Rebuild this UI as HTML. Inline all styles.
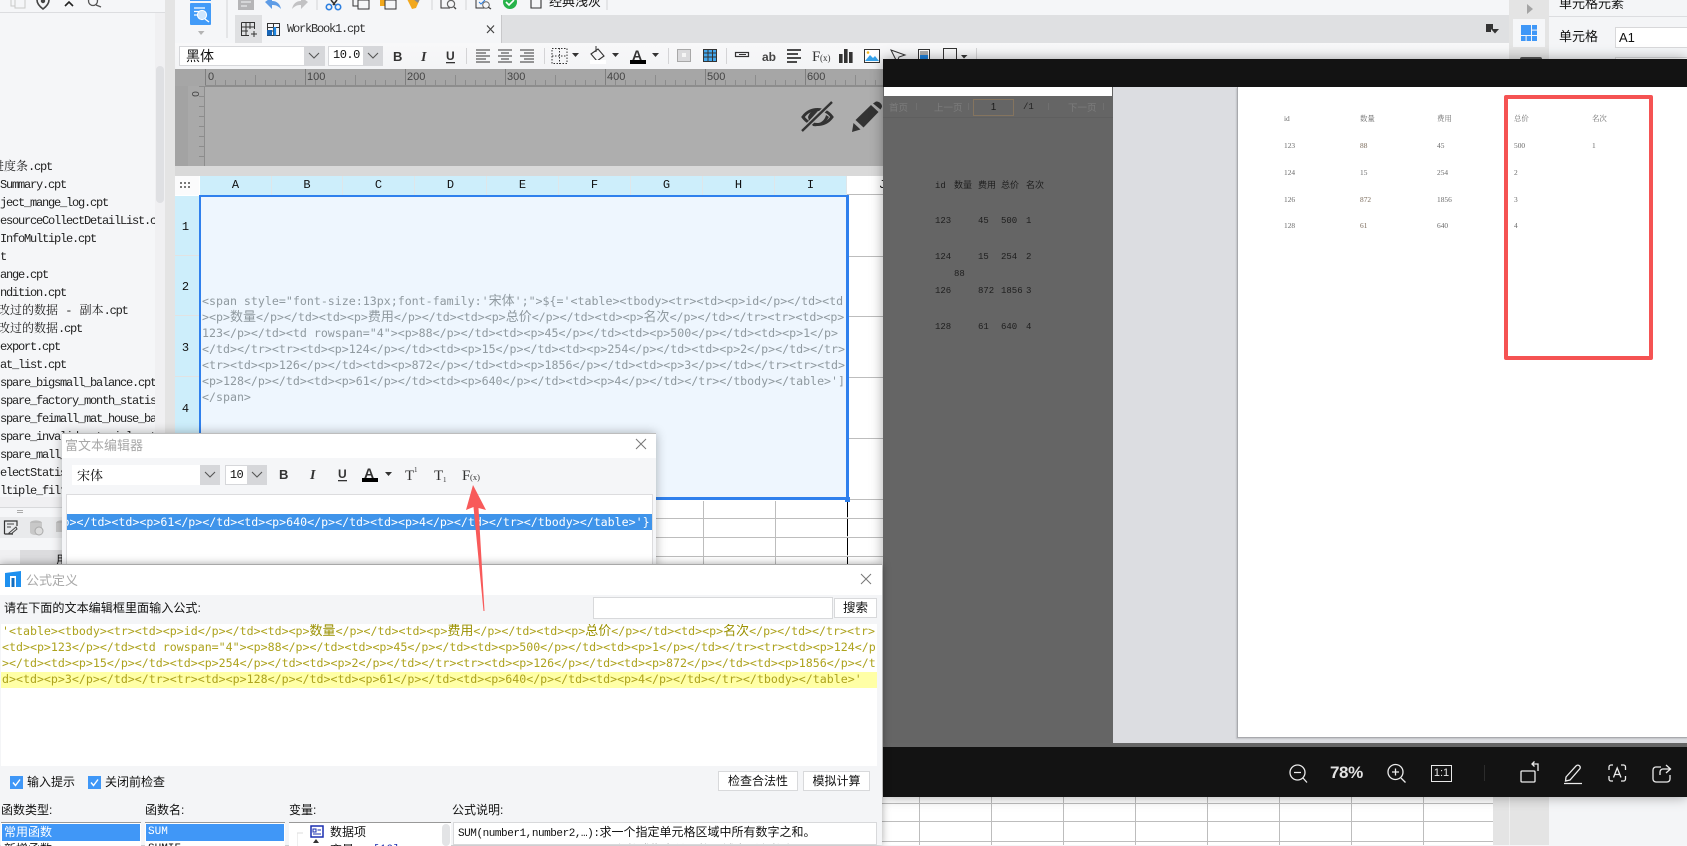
<!DOCTYPE html>
<html lang="zh">
<head>
<meta charset="utf-8">
<title>FineReport</title>
<style>
html,body{margin:0;padding:0}
body{width:1687px;height:845px;overflow:hidden;position:relative;background:#f5f6f8;font-family:"Liberation Sans","Noto Sans CJK SC",sans-serif;color:#111}
.a,.l,.c,.e,.t,.v,svg.a{position:absolute}
.l{left:0;font:12px/18px "Liberation Mono","Noto Serif CJK SC",monospace;letter-spacing:-1.2px;white-space:pre;color:#222}
.l b,.c b,.e b,.m b{font-weight:400;letter-spacing:0}
.c{left:202px;font:11.62px/16px "DejaVu Sans Mono","Noto Sans CJK SC",monospace;white-space:pre;color:#8f999f}
.c b{font-size:13px;line-height:16px}
.e{left:2px;font:11.62px/16px "DejaVu Sans Mono","Noto Sans CJK SC",monospace;white-space:pre;color:#ada21c}
.e b{font-size:13px;line-height:16px;color:#9a9000}
.t{font:7.4px/10px "Liberation Serif","Noto Serif CJK SC",serif;color:#6a6a6a;white-space:pre}
.v{font:9px/12px "Liberation Mono","Noto Sans CJK SC",monospace;color:#1e1e1e;white-space:pre}
.g{font:12px/14px "Noto Sans CJK SC",sans-serif;color:#7c7c7c;white-space:pre}
.h{font:12px/19px "Liberation Mono",monospace;text-align:center;color:#111;top:176px;height:19px;background:#cdeefb;border-right:1px solid #dfe6e9;box-sizing:border-box}
.r{left:175px;width:24px;background:#cdeefb;border-bottom:1px solid #e2e2e2;box-sizing:border-box;font:12px/14px "Liberation Mono",monospace;text-align:center;padding-right:3px;overflow:hidden}
.sep{position:absolute;width:1px;background:#d0d0d3}
.lbl{position:absolute;font-size:14px;line-height:18px;white-space:pre;color:#111}
.hl{position:absolute;height:1px;background:#bdbdbd}
.vl{position:absolute;width:1px;background:#bdbdbd}
</style>
</head>
<body>

<!-- left panel -->
<div class="a" style="left:0;top:0;width:155px;height:845px;background:#f5f6f8;overflow:hidden">
  <div class="l" style="top:158px;left:-8px"><b>进度条</b>.cpt</div>
  <div class="l" style="top:176px">Summary.cpt</div>
  <div class="l" style="top:194px">ject_mange_log.cpt</div>
  <div class="l" style="top:212px">esourceCollectDetailList.c</div>
  <div class="l" style="top:230px">InfoMultiple.cpt</div>
  <div class="l" style="top:248px">t</div>
  <div class="l" style="top:266px">ange.cpt</div>
  <div class="l" style="top:284px">ndition.cpt</div>
  <div class="l" style="top:302px;left:-2px"><b>改过的数据 - 副本</b>.cpt</div>
  <div class="l" style="top:320px;left:-2px"><b>改过的数据</b>.cpt</div>
  <div class="l" style="top:338px">export.cpt</div>
  <div class="l" style="top:356px">at_list.cpt</div>
  <div class="l" style="top:374px">spare_bigsmall_balance.cpt</div>
  <div class="l" style="top:392px">spare_factory_month_statis</div>
  <div class="l" style="top:410px">spare_feimall_mat_house_ba</div>
  <div class="l" style="top:428px">spare_invalid_material.cpt</div>
  <div class="l" style="top:446px">spare_mall_report.cpt</div>
  <div class="l" style="top:464px">electStatistics.cpt</div>
  <div class="l" style="top:482px">ltiple_filter.cpt</div>
</div>
<div class="a" style="left:0;top:12px;width:165px;height:1px;background:#dcdde0"></div>
<svg class="a" style="left:0;top:0" width="176" height="14" viewBox="0 0 176 14">
  <rect x="11" y="-3" width="10" height="9" fill="none" stroke="#c9c9c9"/><rect x="15" y="-1" width="10" height="9" fill="#f5f6f8" stroke="#c9c9c9"/>
  <path d="M37 0 C37 3 39 6 43 9 C47 6 49 3 49 0" fill="none" stroke="#444" stroke-width="1.6"/><circle cx="43" cy="1" r="2.2" fill="#444"/>
  <path d="M65 6 L69 2 L73 6" fill="none" stroke="#222" stroke-width="1.6"/>
  <circle cx="93" cy="1" r="4.5" fill="none" stroke="#555" stroke-width="1.3"/><path d="M96 5 L101 7" stroke="#555" stroke-width="1.4"/>
  <path d="M174 3 L169 8 L174 13Z" fill="#9c9c9c"/>
</svg>
<div class="a" style="left:155px;top:13px;width:10px;height:460px;background:#f0f0f2"></div>
<div class="a" style="left:156px;top:66px;width:8px;height:137px;background:#dfe0e3;border-radius:4px"></div>
<div class="a" style="left:165px;top:0;width:10px;height:845px;background:#e4e4e4"></div>
<div class="a" style="left:0;top:507px;width:175px;height:1px;background:#d8d9db"></div>
<div class="a" style="left:0;top:497px;width:175px;height:10px;background:#f0f0f2"></div>
<div class="a" style="left:17px;top:510px;width:6px;height:1px;background:#aaa"></div>
<div class="a" style="left:17px;top:512px;width:6px;height:1px;background:#aaa"></div>
<div class="a" style="left:0;top:517px;width:165px;height:21px;background:#e9eaec"></div>
<div class="a" style="left:0;top:550px;width:62px;height:14px;background:#f0f0f2"></div>
<div class="a" style="left:20px;top:550px;width:42px;height:14px;background:#dcdcde"></div>
<svg class="a" style="left:0;top:516px" width="62" height="22" viewBox="0 0 62 22">
  <path d="M4.5 18 V5 H17 V10 M4.5 18 H13" fill="none" stroke="#333" stroke-width="1.2"/><path d="M7 8 H14 M7 11 H11 M9 17 L16 11 L17 13 L11 18Z" fill="none" stroke="#444"/>
  <ellipse cx="36" cy="7" rx="6" ry="2.6" fill="#bcbcbc"/><path d="M30 7 V16 C30 20 42 20 42 16 V7" fill="#c8c8c8"/><circle cx="39" cy="15" r="4" fill="#dcdcdc" stroke="#aaa"/>
  <ellipse cx="61" cy="7" rx="5" ry="2.6" fill="#bcbcbc"/><path d="M56 7 V16 H62 V7" fill="#c8c8c8"/>
</svg>
<div class="lbl" style="left:56px;top:551px;font-size:12px">用</div>

<!-- top toolbar -->
<div class="a" style="left:175px;top:0;width:1334px;height:15px;background:#f5f6f8"></div>
<div class="a" style="left:190px;top:0;width:21px;height:1px;background:#3f97f7"></div>
<svg class="a" style="left:175px;top:0" width="440" height="44" viewBox="175 0 440 44">
  <rect x="190" y="3" width="21" height="22" rx="1" fill="#429bf8"/>
  <path d="M194 8 H205 M194 11.5 H200 M194 15 H198" stroke="#fff" stroke-width="1.3"/>
  <circle cx="202" cy="15" r="4.6" fill="#cfe6fd" stroke="#fff"/><path d="M205 19 L209 22" stroke="#fff" stroke-width="1.4"/>
  <path d="M198 31 H204.5 L201 35Z" fill="#b4b4b4"/>
  <rect x="226.5" y="0" width="1" height="38" fill="#d4d4d6"/>
  <rect x="238" y="-3" width="16" height="13" fill="#b5b5b7"/><path d="M241 2 H251 M241 6 H247" stroke="#f5f6f8"/>
  <path d="M265 2 L272 -3 V1 C277 1 280 4 281 9 C277 5 275 5 272 5 V9Z" fill="#5e9ce6"/>
  <path d="M308 2 L301 -3 V1 C296 1 293 4 292 9 C296 5 298 5 301 5 V9Z" fill="#c2c2c4"/>
  <rect x="316.5" y="0" width="1" height="10" fill="#d4d4d6"/>
  <path d="M331 0 L335 5 M337 0 L333 5" stroke="#333" stroke-width="1.6"/>
  <circle cx="329" cy="7" r="2.7" fill="none" stroke="#2d7fe0" stroke-width="1.6"/><circle cx="338" cy="7" r="2.7" fill="none" stroke="#2d7fe0" stroke-width="1.6"/>
  <rect x="353" y="-4" width="10" height="10" fill="none" stroke="#333"/><rect x="358" y="0" width="11" height="9" fill="#f5f6f8" stroke="#333"/>
  <rect x="380" y="-4" width="10" height="10" fill="#f2a81d"/><rect x="385" y="0" width="11" height="9" fill="#f5f6f8" stroke="#333"/>
  <path d="M407 -1 H420 L416 8 L412 9Z" fill="#f2a81d"/><path d="M413 -1 L420 -1 L418 3Z" fill="#888"/>
  <rect x="431.5" y="0" width="1" height="10" fill="#d4d4d6"/>
  <path d="M441 -1 V8 H450" fill="none" stroke="#333"/><circle cx="451" cy="4" r="3.6" fill="none" stroke="#666" stroke-width="1.2"/><path d="M454 7 L456 9" stroke="#444" stroke-width="1.3"/>
  <rect x="465.5" y="0" width="1" height="10" fill="#d4d4d6"/>
  <path d="M476 -1 V8 H485" fill="none" stroke="#333"/><path d="M479 2 L481 4 L485 0" fill="none" stroke="#2d7fe0"/><circle cx="486" cy="5" r="3.3" fill="none" stroke="#666"/><path d="M488 7 L491 9" stroke="#444" stroke-width="1.3"/>
  <circle cx="510" cy="2" r="7" fill="#27b34a"/><path d="M506 2 L509 5 L514 0" fill="none" stroke="#fff" stroke-width="1.6"/>
  <path d="M531 -2 V8 H541 V-2" fill="none" stroke="#333" stroke-width="1.1"/>
  <rect x="606.5" y="0" width="1" height="10" fill="#d4d4d6"/>
</svg>
<div class="lbl" style="left:549px;top:-7px;font-size:13px;line-height:18px">经典浅灰</div>

<!-- tab row -->
<div class="a" style="left:235px;top:15px;width:1274px;height:28px;background:#dfe0e2"></div>
<div class="a" style="left:262px;top:15px;width:239px;height:28px;background:#f5f6f8;border-right:1px solid #c8c8ca;box-sizing:content-box"></div>
<svg class="a" style="left:235px;top:15px" width="270" height="28" viewBox="235 15 270 28">
  <path d="M241.5 22.5 H254.5 V29 M241.5 22.5 V35.5 H249 M241.5 27 H254 M241.5 31 H248 M246 22.5 V35.5 M250 22.5 V29 M251 34 H257 M254 31 V37" fill="none" stroke="#333" stroke-width="1"/>
  <path d="M267.5 23.5 H279.5 V35.5 H267.5Z M267.5 27.5 H279.5 M273.5 23.5 V35.5 M267.5 31 H273" fill="none" stroke="#333" stroke-width="1"/>
  <rect x="267" y="30" width="5" height="5.5" fill="#1565b8"/><rect x="273.5" y="27" width="2.6" height="8.5" fill="#1e88e5"/>
  <path d="M487 25.5 L494 33 M494 25.5 L487 33" stroke="#444" stroke-width="1.2"/>
</svg>
<div class="a" style="left:287px;top:21px;font:12px/16px 'Liberation Mono',monospace;letter-spacing:-1.2px;color:#333;white-space:pre">WorkBook1.cpt</div>
<svg class="a" style="left:1486px;top:24px" width="13" height="10" viewBox="0 0 13 10"><path d="M0 0 H7 V5 H5 V8 H0Z" fill="#333"/><path d="M5 5 H13 L9 9.5Z" fill="#333"/></svg>

<!-- format toolbar -->
<div class="a" style="left:175px;top:43px;width:1334px;height:26px;background:linear-gradient(#f8f8f9,#f3f4f6)"></div>
<div class="a" style="left:179px;top:46px;width:146px;height:20px;background:#d6d7da"></div>
<div class="a" style="left:180px;top:47px;width:124px;height:18px;background:#fff"></div>
<div class="a" style="left:186px;top:46px;font:14px/20px 'Noto Sans CJK SC',sans-serif">黑体</div>
<div class="a" style="left:328px;top:46px;width:55px;height:20px;background:#d6d7da"></div>
<div class="a" style="left:329px;top:47px;width:34px;height:18px;background:#fff"></div>
<div class="a" style="left:333px;top:46px;font:12px/19px 'Liberation Mono',monospace;letter-spacing:-.5px">10.0</div>
<svg class="a" style="left:175px;top:43px" width="810" height="26" viewBox="175 43 810 26">
  <path d="M309 53 L314 58 L319 53 M368 53 L373 58 L378 53" fill="none" stroke="#555" stroke-width="1.1"/>
  <text x="393" y="61" font-family="Liberation Sans" font-weight="700" font-size="13" fill="#333">B</text>
  <text x="421" y="61" font-family="Liberation Serif" font-style="italic" font-weight="700" font-size="14" fill="#333">I</text>
  <text x="446" y="60" font-family="Liberation Sans" font-weight="700" font-size="12" fill="#333">U</text><rect x="446" y="62" width="9" height="1.3" fill="#333"/>
  <rect x="466" y="48" width="1" height="16" fill="#d4d4d6"/>
  <path d="M476 51 H490 M476 54 H486 M476 57 H490 M476 60 H486 M476 63 H490" stroke="#333" transform="translate(0 -1)"/>
  <path d="M498 50 H512 M501 53 H509 M498 56 H512 M501 59 H509 M498 62 H512" stroke="#333"/>
  <path d="M520 50 H534 M524 53 H534 M520 56 H534 M524 59 H534 M520 62 H534" stroke="#333"/>
  <rect x="544" y="48" width="1" height="16" fill="#d4d4d6"/>
  <rect x="552" y="48.5" width="15" height="15" fill="none" stroke="#333" stroke-dasharray="1.5 1.5"/><path d="M559.5 48 V64 M552 56 H567" stroke="#333" stroke-dasharray="1.5 1.5"/>
  <path d="M572 53 H579 L575.5 57Z M612 53 H619 L615.5 57Z M652 53 H659 L655.5 57Z" fill="#333"/>
  <path d="M591 54 L598 49 L604 56 L597 61Z" fill="none" stroke="#333" stroke-width="1.1"/><path d="M596 46 V52" stroke="#333"/><rect x="590" y="60" width="16" height="4" fill="#fff"/>
  <text x="632" y="60" font-family="Liberation Sans" font-weight="700" font-size="14" fill="#333">A</text><rect x="630" y="60" width="16" height="4" fill="#000"/>
  <rect x="668" y="48" width="1" height="16" fill="#d4d4d6"/>
  <rect x="677.5" y="49.5" width="13" height="12" fill="#dadadc" stroke="#a8a8a8"/><rect x="682" y="53" width="4" height="4" fill="#f5f5f5"/>
  <rect x="703.5" y="49.5" width="13" height="12" fill="#41a7ee" stroke="#333"/><path d="M703 53 H717 M703 57 H717 M708 50 V61 M712.5 50 V61" stroke="#333"/>
  <rect x="726" y="48" width="1" height="16" fill="#d4d4d6"/>
  <rect x="735.5" y="52.5" width="13" height="4" fill="none" stroke="#333" stroke-width="1.2"/><path d="M739 54.5 H746" stroke="#333"/>
  <text x="762" y="61" font-family="Liberation Sans" font-weight="700" font-size="12" fill="#444">ab</text>
  <path d="M787 50 H801 M787 54 H798 M787 58 H801 M787 62 H797" stroke="#333" stroke-width="1.8"/>
  <text x="812" y="61" font-family="Liberation Serif" font-size="15" fill="#333">F</text><text x="820" y="61" font-family="Liberation Serif" font-size="9" fill="#333">(x)</text>
  <rect x="839" y="54" width="3.6" height="9" fill="#333"/><rect x="844" y="49" width="3.6" height="14" fill="#333"/><rect x="849" y="52" width="3.6" height="11" fill="#333"/>
  <rect x="864.5" y="49.5" width="15" height="13" fill="#fff" stroke="#333"/><path d="M865 61 L870 55 L873 58 L875 56 L879 61Z" fill="#36a2ea"/><circle cx="868" cy="52.5" r="1.3" fill="#f5b81c"/>
  <path d="M891 50 L905 55 L899 57 L897 62Z" fill="none" stroke="#333"/>
  <rect x="918.5" y="49.5" width="11" height="13" fill="#fff" stroke="#333"/><path d="M920 52 H928 M920 54 H928" stroke="#555"/><rect x="920" y="55" width="8" height="5" fill="#1e7fd8"/>
  <rect x="943.5" y="48.5" width="13" height="14" fill="none" stroke="#333"/>
  <path d="M961 55 H967.5 L964 58.5Z" fill="#333"/>
  <rect x="976" y="48" width="1" height="16" fill="#d4d4d6"/>
</svg>

<!-- ruler & canvas -->
<div class="a" style="left:175px;top:69px;width:708px;height:107px;background:#aeaeae;overflow:hidden">
  <div class="a" style="left:0;top:0;width:708px;height:17px;background:#a6a6a6"></div>
  <div class="a" style="left:30px;top:16px;width:678px;height:2px;background:#8d8d8d"></div>
  <div class="a" style="left:30px;top:11px;width:678px;height:5px;background:repeating-linear-gradient(90deg,#8c8c8c 0 1px,transparent 1px 10px)"></div>
  <div class="a" style="left:30px;top:6px;width:678px;height:10px;background:repeating-linear-gradient(90deg,#8c8c8c 0 1px,transparent 1px 50px)"></div>
  <div class="a" style="left:30px;top:0;width:678px;height:16px;background:repeating-linear-gradient(90deg,#7f7f7f 0 1px,transparent 1px 100px)"></div>
  <div class="a" style="left:0;top:17px;width:13px;height:80px;background:#a3a3a3"></div>
  <div class="a" style="left:13px;top:17px;width:17px;height:80px;background:#a9a9a9"></div>
  <div class="a" style="left:29px;top:17px;width:1px;height:80px;background:#8d8d8d"></div>
  <div class="a" style="left:24px;top:17px;width:5px;height:80px;background:repeating-linear-gradient(180deg,#8c8c8c 0 1px,transparent 1px 10px)"></div>
  <div class="a" style="left:33px;top:2px;font:11px/13px 'Liberation Sans',sans-serif;color:#444">0</div>
  <div class="a" style="left:132px;top:2px;font:11px/13px 'Liberation Sans',sans-serif;color:#444">100</div>
  <div class="a" style="left:232px;top:2px;font:11px/13px 'Liberation Sans',sans-serif;color:#444">200</div>
  <div class="a" style="left:332px;top:2px;font:11px/13px 'Liberation Sans',sans-serif;color:#444">300</div>
  <div class="a" style="left:432px;top:2px;font:11px/13px 'Liberation Sans',sans-serif;color:#444">400</div>
  <div class="a" style="left:532px;top:2px;font:11px/13px 'Liberation Sans',sans-serif;color:#444">500</div>
  <div class="a" style="left:632px;top:2px;font:11px/13px 'Liberation Sans',sans-serif;color:#444">600</div>
  <div class="a" style="left:16px;top:20px;font:10px/10px 'Liberation Sans',sans-serif;color:#444;transform:rotate(90deg)">0</div>
</div>
<svg class="a" style="left:801px;top:101px" width="33" height="31" viewBox="0 0 33 31">
  <path d="M2 16 C9 6 24 6 31 16 C24 26 9 26 2 16Z" fill="none" stroke="#333" stroke-width="3"/>
  <path d="M7 16 C9 10 13 9 17 10 L8 20Z" fill="#333"/>
  <path d="M12 23 C20 23 24 19 25 14 L28 16 C24 23 18 26 12 25Z" fill="#333"/>
  <path d="M1 30 L31 1" stroke="#aeaeae" stroke-width="5"/>
  <path d="M1 30 L31 1" stroke="#333" stroke-width="2.4"/>
</svg>
<svg class="a" style="left:852px;top:101px" width="31" height="31" viewBox="0 0 31 31">
  <path d="M0 31 L1.5 22 L8.5 28.5Z" fill="#333"/><path d="M3.5 19 L19 4 L26.5 11 L11.5 26.5Z" fill="#333"/><path d="M21 2.5 L24 0.5 C27 0 30.5 3 30 6 L28.5 8.5Z" fill="#333"/>
</svg>

<!-- grid -->
<div class="a" style="left:175px;top:166px;width:708px;height:10px;background:#d9d9d9"></div>
<div class="a" style="left:175px;top:176px;width:1318px;height:669px;background:#fff"></div>
<div class="a" style="left:175px;top:176px;width:24px;height:19px;background:#fbfbfc"></div>
<svg class="a" style="left:179px;top:181px" width="12" height="10" viewBox="0 0 12 10"><path d="M1 1 h2v2h-2z M5 1 h2v2h-2z M9 1 h2v2h-2z M1 5 h2v2h-2z M5 5 h2v2h-2z M9 5 h2v2h-2z" fill="#777"/></svg>
<div class="a h" style="left:200px;width:72px">A</div>
<div class="a h" style="left:272px;width:71px">B</div>
<div class="a h" style="left:343px;width:72px">C</div>
<div class="a h" style="left:415px;width:72px">D</div>
<div class="a h" style="left:487px;width:72px">E</div>
<div class="a h" style="left:559px;width:72px">F</div>
<div class="a h" style="left:631px;width:72px">G</div>
<div class="a h" style="left:703px;width:72px">H</div>
<div class="a h" style="left:775px;width:72px">I</div>
<div class="a h" style="left:847px;width:72px;background:#fff;border-bottom:1px solid #bbb">J</div>
<div class="a r" style="top:196px;height:60px;line-height:63px">1</div>
<div class="a r" style="top:256px;height:60px;line-height:63px">2</div>
<div class="a r" style="top:316px;height:61px;line-height:64px">3</div>
<div class="a r" style="top:377px;height:61px;line-height:64px">4</div>
<div class="a r" style="top:438px;height:61px;line-height:64px">5</div>
<!-- selected -->
<div class="a" style="left:199px;top:195px;width:645px;height:300px;background:#eef6fe;border:2px solid #2f80ed;border-width:2px 3px 3px 2px"></div>
<div class="hl" style="left:849px;top:256px;width:34px"></div>
<div class="hl" style="left:849px;top:316px;width:34px"></div>
<div class="hl" style="left:849px;top:377px;width:34px"></div>
<div class="hl" style="left:849px;top:438px;width:34px"></div>
<div class="hl" style="left:849px;top:499px;width:34px"></div>
<div class="hl" style="left:650px;top:518px;width:233px"></div>
<div class="hl" style="left:650px;top:537px;width:233px"></div>
<div class="hl" style="left:650px;top:556px;width:233px"></div>
<div class="vl" style="left:703px;top:501px;height:63px"></div>
<div class="vl" style="left:775px;top:501px;height:63px"></div>
<div class="a" style="left:847px;top:500px;width:1px;height:64px;background:repeating-linear-gradient(180deg,#000 0 17px,#bbb 17px 19px)"></div>
<div class="a" style="left:845px;top:497px;width:5px;height:5px;background:#2f80ed"></div>

<div class="c" style="top:293px">&lt;span style="font-size:13px;font-family:'<b>宋体</b>';"&gt;${='&lt;table&gt;&lt;tbody&gt;&lt;tr&gt;&lt;td&gt;&lt;p&gt;id&lt;/p&gt;&lt;/td&gt;&lt;td</div>
<div class="c" style="top:309px">&gt;&lt;p&gt;<b>数量</b>&lt;/p&gt;&lt;/td&gt;&lt;td&gt;&lt;p&gt;<b>费用</b>&lt;/p&gt;&lt;/td&gt;&lt;td&gt;&lt;p&gt;<b>总价</b>&lt;/p&gt;&lt;/td&gt;&lt;td&gt;&lt;p&gt;<b>名次</b>&lt;/p&gt;&lt;/td&gt;&lt;/tr&gt;&lt;tr&gt;&lt;td&gt;&lt;p&gt;</div>
<div class="c" style="top:325px">123&lt;/p&gt;&lt;/td&gt;&lt;td rowspan="4"&gt;&lt;p&gt;88&lt;/p&gt;&lt;/td&gt;&lt;td&gt;&lt;p&gt;45&lt;/p&gt;&lt;/td&gt;&lt;td&gt;&lt;p&gt;500&lt;/p&gt;&lt;/td&gt;&lt;td&gt;&lt;p&gt;1&lt;/p&gt;</div>
<div class="c" style="top:341px">&lt;/td&gt;&lt;/tr&gt;&lt;tr&gt;&lt;td&gt;&lt;p&gt;124&lt;/p&gt;&lt;/td&gt;&lt;td&gt;&lt;p&gt;15&lt;/p&gt;&lt;/td&gt;&lt;td&gt;&lt;p&gt;254&lt;/p&gt;&lt;/td&gt;&lt;td&gt;&lt;p&gt;2&lt;/p&gt;&lt;/td&gt;&lt;/tr&gt;</div>
<div class="c" style="top:357px">&lt;tr&gt;&lt;td&gt;&lt;p&gt;126&lt;/p&gt;&lt;/td&gt;&lt;td&gt;&lt;p&gt;872&lt;/p&gt;&lt;/td&gt;&lt;td&gt;&lt;p&gt;1856&lt;/p&gt;&lt;/td&gt;&lt;td&gt;&lt;p&gt;3&lt;/p&gt;&lt;/td&gt;&lt;/tr&gt;&lt;tr&gt;&lt;td&gt;</div>
<div class="c" style="top:373px">&lt;p&gt;128&lt;/p&gt;&lt;/td&gt;&lt;td&gt;&lt;p&gt;61&lt;/p&gt;&lt;/td&gt;&lt;td&gt;&lt;p&gt;640&lt;/p&gt;&lt;/td&gt;&lt;td&gt;&lt;p&gt;4&lt;/p&gt;&lt;/td&gt;&lt;/tr&gt;&lt;/tbody&gt;&lt;/table&gt;']</div>
<div class="c" style="top:389px">&lt;/span&gt;</div>

<!-- bottom grid -->
<div class="hl" style="left:882px;top:803px;width:611px"></div>
<div class="hl" style="left:882px;top:821px;width:611px"></div>
<div class="hl" style="left:882px;top:841px;width:611px"></div>
<div class="vl" style="left:919px;top:797px;height:48px"></div>
<div class="vl" style="left:991px;top:797px;height:48px"></div>
<div class="vl" style="left:1063px;top:797px;height:48px"></div>
<div class="vl" style="left:1135px;top:797px;height:48px"></div>
<div class="vl" style="left:1207px;top:797px;height:48px"></div>
<div class="vl" style="left:1279px;top:797px;height:48px"></div>
<div class="vl" style="left:1351px;top:797px;height:48px"></div>
<div class="vl" style="left:1423px;top:797px;height:48px"></div>

<!-- right panel -->
<div class="a" style="left:1493px;top:59px;width:16px;height:786px;background:#e4e4e4"></div>
<div class="a" style="left:1509px;top:0;width:40px;height:845px;background:#e4e4e4"></div>
<div class="a" style="left:1509px;top:797px;width:1px;height:48px;background:#f0f0f0"></div>
<svg class="a" style="left:1526px;top:3px" width="8" height="12" viewBox="0 0 8 12"><path d="M1 1 L7 6 L1 11Z" fill="#a4a4a4"/></svg>
<div class="a" style="left:1513px;top:19px;width:32px;height:28px;background:#f5f6f8"></div>
<svg class="a" style="left:1521px;top:25px" width="16" height="16" viewBox="0 0 16 16"><rect width="10" height="10" fill="#3f97f7"/><rect x="11" width="5" height="4.6" fill="#3f97f7"/><rect x="11" y="5.6" width="5" height="4.4" fill="#3f97f7"/><rect y="11" width="4.6" height="5" fill="#3f97f7"/><rect x="5.6" y="11" width="4.4" height="5" fill="#3f97f7"/><rect x="11" y="11" width="5" height="5" fill="#3f97f7"/></svg>
<div class="a" style="left:1520px;top:57px;width:22px;height:4px;background:#555;border-radius:2px"></div>
<div class="a" style="left:1549px;top:0;width:138px;height:845px;background:#f4f5f7"></div>
<div class="a" style="left:1549px;top:16px;width:138px;height:1px;background:#dcdde0"></div>
<div class="lbl" style="left:1559px;top:-5px;font-size:13px">单元格元素</div>
<div class="lbl" style="left:1559px;top:28px;font-size:13px">单元格</div>
<div class="a" style="left:1615px;top:27px;width:72px;height:19px;background:#fff;border:1px solid #d8d8da;border-right:0;font:13px/19px 'Liberation Sans',sans-serif;padding-left:3px;box-sizing:content-box">A1</div>
<div class="a" style="left:1615px;top:57px;width:72px;height:10px;background:#fff;border:1px solid #d8d8da"></div>

<!-- preview overlay -->
<div class="a" style="left:883px;top:59px;width:804px;height:738px;background:#dcdde1;box-shadow:0 0 12px rgba(0,0,0,.35)"></div>
<div class="a" style="left:883px;top:87px;width:804px;height:660px;background:#dcdde1;overflow:hidden">
  <div class="a" style="left:0;top:0;width:230px;height:660px;background:#656565"></div>
  <div class="a" style="left:1px;top:0;width:228px;height:9px;background:#fff"></div>
  <div class="a" style="left:0;top:30px;width:230px;height:1px;background:#5f5f5f"></div>
  <div class="a" style="left:0;top:656px;width:804px;height:4px;background:#666"></div>
  <div class="a" style="left:354px;top:0;width:450px;height:650px;background:#fff;border-left:1px solid #a8a9ad;border-bottom:1px solid #a8a9ad;box-shadow:-1px 1px 1px #c2c3c7"></div>
</div>
<div class="a" style="left:883px;top:59px;width:804px;height:28px;background:#131313"></div>
<div class="a" style="left:883px;top:747px;width:804px;height:50px;background:#131313"></div>

<!-- preview left content -->
<div class="a g" style="left:889px;top:100px;font-size:9.5px">首页</div>
<div class="a g" style="left:934px;top:100px;font-size:9.5px">上一页</div>
<div class="a g" style="left:1068px;top:100px;font-size:9.5px">下一页</div>
<div class="a" style="left:973px;top:99px;width:39px;height:15px;border:1px solid #84745f;text-align:center;font:10px/15px 'Liberation Sans',sans-serif;color:#1a1a1a">1</div>
<div class="a" style="left:1023px;top:100px;font:9px/14px 'Liberation Mono',monospace;color:#222">/1</div>
<div class="a" style="left:916px;top:103px;width:1px;height:7px;background:#707070"></div>
<div class="a" style="left:968px;top:103px;width:1px;height:7px;background:#707070"></div>
<div class="a" style="left:1048px;top:103px;width:1px;height:7px;background:#707070"></div>
<div class="a" style="left:1103px;top:103px;width:1px;height:7px;background:#707070"></div>

<div class="v" style="left:935px;top:180px">id</div><div class="v" style="left:954px;top:180px">数量</div><div class="v" style="left:978px;top:180px">费用</div><div class="v" style="left:1001px;top:180px">总价</div><div class="v" style="left:1026px;top:180px">名次</div>
<div class="v" style="left:935px;top:215px">123</div><div class="v" style="left:978px;top:215px">45</div><div class="v" style="left:1001px;top:215px">500</div><div class="v" style="left:1026px;top:215px">1</div>
<div class="v" style="left:935px;top:251px">124</div><div class="v" style="left:978px;top:251px">15</div><div class="v" style="left:1001px;top:251px">254</div><div class="v" style="left:1026px;top:251px">2</div>
<div class="v" style="left:954px;top:268px">88</div>
<div class="v" style="left:935px;top:285px">126</div><div class="v" style="left:978px;top:285px">872</div><div class="v" style="left:1001px;top:285px">1856</div><div class="v" style="left:1026px;top:285px">3</div>
<div class="v" style="left:935px;top:321px">128</div><div class="v" style="left:978px;top:321px">61</div><div class="v" style="left:1001px;top:321px">640</div><div class="v" style="left:1026px;top:321px">4</div>

<!-- preview page table -->
<div class="t" style="left:1284px;top:114px">id</div><div class="t" style="left:1360px;top:114px">数量</div><div class="t" style="left:1437px;top:114px">费用</div><div class="t" style="left:1514px;top:114px">总价</div><div class="t" style="left:1592px;top:114px">名次</div>
<div class="t" style="left:1284px;top:141px">123</div><div class="t" style="left:1360px;top:141px;color:#7a6a5a">88</div><div class="t" style="left:1437px;top:141px">45</div><div class="t" style="left:1514px;top:141px">500</div><div class="t" style="left:1592px;top:141px">1</div>
<div class="t" style="left:1284px;top:168px">124</div><div class="t" style="left:1360px;top:168px">15</div><div class="t" style="left:1437px;top:168px">254</div><div class="t" style="left:1514px;top:168px">2</div>
<div class="t" style="left:1284px;top:195px">126</div><div class="t" style="left:1360px;top:195px;color:#7a6a5a">872</div><div class="t" style="left:1437px;top:195px">1856</div><div class="t" style="left:1514px;top:195px">3</div>
<div class="t" style="left:1284px;top:221px">128</div><div class="t" style="left:1360px;top:221px;color:#7a6a5a">61</div><div class="t" style="left:1437px;top:221px">640</div><div class="t" style="left:1514px;top:221px">4</div>
<div class="a" style="left:1504px;top:95px;width:141px;height:257px;border:4px solid #f55353;border-radius:2px"></div>

<!-- preview bottom toolbar -->
<div class="a" style="left:1330px;top:762px;font:700 17px/22px 'Liberation Sans',sans-serif;color:#e2e2e2;letter-spacing:-.4px">78%</div>
<div class="a" style="left:1431px;top:765px;width:19px;height:15px;border:1px solid #e8e8e8;text-align:center;font:11px/15px 'Liberation Sans',sans-serif;color:#e8e8e8">1:1</div>
<div class="a" style="left:1484px;top:765px;width:1px;height:16px;background:#2c2c2c"></div>
<svg class="a" style="left:1285px;top:758px" width="400" height="32" viewBox="1285 758 400 32" fill="none" stroke="#ececec" stroke-width="1.3">
  <circle cx="1297.5" cy="772.5" r="7.5"/><path d="M1303 778 L1307 782.5 M1294 772.5 H1301"/>
  <circle cx="1395.5" cy="772" r="7.5"/><path d="M1401 778 L1405.5 782.5 M1392 772 H1399 M1395.5 768.5 V775.5"/>
  <rect x="1521" y="771" width="14" height="11" rx="1"/><path d="M1538 771 V764 H1532 M1534.5 761.5 L1532 764 L1534.5 766.5"/>
  <path d="M1566 777 L1576 766 C1578 764 1581 766 1580 768.5 L1570 780 L1565.5 781Z"/><path d="M1564 783.5 H1582"/>
  <path d="M1609 770 V767 A2 2 0 0 1 1611 765 H1613 M1621 765 H1623.5 A2 2 0 0 1 1625.5 767 V770 M1625.5 776 V779 A2 2 0 0 1 1623.5 781 H1621 M1613 781 H1611 A2 2 0 0 1 1609 779 V776"/>
  <path d="M1613.5 777.5 L1617.2 768 L1621 777.5 M1614.8 774.5 H1619.7"/>
  <path d="M1661 767 H1656 A3 3 0 0 0 1653 770 V779 A3 3 0 0 0 1656 782 H1667 A3 3 0 0 0 1670 779 V775"/>
  <path d="M1660 775 V772 A3 3 0 0 1 1663 769 H1670 M1666 765 L1670.5 769 L1666 773"/>
</svg>

<!-- rich text dialog -->
<div class="a" style="left:62px;top:433px;width:594px;height:140px;background:#f5f6f8;box-shadow:0 0 10px rgba(0,0,0,.3);border-top:1px solid #bdbdbd;box-sizing:border-box"></div>
<div class="a" style="left:62px;top:434px;width:594px;height:24px;background:#fff"></div>
<div class="a" style="left:65px;top:433px;font:13px/24px 'Noto Sans CJK SC',sans-serif;color:#a8a8a8">富文本编辑器</div>
<svg class="a" style="left:635px;top:438px" width="12" height="12" viewBox="0 0 12 12"><path d="M1 1 L11 11 M11 1 L1 11" stroke="#777" stroke-width="1"/></svg>
<div class="a" style="left:72px;top:465px;width:148px;height:20px;background:#d6d7da"></div>
<div class="a" style="left:72px;top:465px;width:128px;height:20px;background:#fff"></div>
<div class="a" style="left:77px;top:464px;font:13px/21px 'Noto Serif CJK SC',serif">宋体</div>
<div class="a" style="left:225px;top:465px;width:42px;height:20px;background:#d6d7da"></div>
<div class="a" style="left:226px;top:466px;width:21px;height:18px;background:#fff;font:12px/18px 'Liberation Mono',monospace;text-align:center;letter-spacing:-.6px">10</div>
<svg class="a" style="left:200px;top:462px" width="300" height="28" viewBox="200 462 300 28">
  <path d="M205 472 L210 477 L215 472 M252 472 L257 477 L262 472" fill="none" stroke="#555" stroke-width="1.1"/>
  <text x="279" y="479" font-family="Liberation Sans" font-weight="700" font-size="13" fill="#333">B</text>
  <text x="310" y="479" font-family="Liberation Serif" font-style="italic" font-weight="700" font-size="14" fill="#333">I</text>
  <text x="338" y="478" font-family="Liberation Sans" font-weight="700" font-size="12" fill="#333">U</text><rect x="338" y="480" width="9" height="1.3" fill="#333"/>
  <text x="364" y="478" font-family="Liberation Sans" font-weight="700" font-size="14" fill="#333">A</text><rect x="362" y="478" width="16" height="4" fill="#000"/>
  <path d="M385 472 H392 L388.5 476Z" fill="#333"/>
  <text x="405" y="480" font-family="Liberation Serif" font-size="15" fill="#333">T</text><text x="414" y="472" font-family="Liberation Serif" font-size="7" fill="#333">1</text>
  <text x="434" y="480" font-family="Liberation Serif" font-size="15" fill="#333">T</text><text x="443" y="482" font-family="Liberation Serif" font-size="7" fill="#333">1</text>
  <text x="462" y="480" font-family="Liberation Serif" font-size="15" fill="#333">F</text><text x="470" y="480" font-family="Liberation Serif" font-size="8.5" fill="#333">(x)</text>
</svg>
<div class="a" style="left:66px;top:494px;width:587px;height:72px;background:#fff;border:1px solid #dcdcde;box-sizing:border-box"></div>
<div class="a" style="left:67px;top:514px;width:585px;height:16px;background:#3f94ea;overflow:hidden"><div class="c" style="left:-4.5px;top:0;color:#fff">p&gt;&lt;/td&gt;&lt;td&gt;&lt;p&gt;61&lt;/p&gt;&lt;/td&gt;&lt;td&gt;&lt;p&gt;640&lt;/p&gt;&lt;/td&gt;&lt;td&gt;&lt;p&gt;4&lt;/p&gt;&lt;/td&gt;&lt;/tr&gt;&lt;/tbody&gt;&lt;/table&gt;'}</div></div>

<!-- formula dialog -->
<div class="a" style="left:0;top:564px;width:882px;height:281px;background:#f4f5f7;box-shadow:0 0 8px rgba(0,0,0,.35);border-top:1px solid #a8a8a8;box-sizing:border-box"></div>
<div class="a" style="left:0;top:565px;width:882px;height:30px;background:#fff"></div>
<svg class="a" style="left:5px;top:571px" width="16" height="16" viewBox="0 0 16 16"><path d="M0 2 L16 0 V16 H11 V5 H5 V16 H0Z" fill="#1e90ef"/><rect x="6.5" y="7" width="3" height="9" fill="#0f6cc0"/></svg>
<div class="a" style="left:26px;top:566px;font:13px/27px 'Noto Sans CJK SC',sans-serif;color:#a8a8a8">公式定义</div>
<svg class="a" style="left:860px;top:573px" width="12" height="12" viewBox="0 0 12 12"><path d="M1 1 L11 11 M11 1 L1 11" stroke="#777" stroke-width="1"/></svg>
<div class="lbl" style="left:4px;top:599px;font-size:12.1px">请在下面的文本编辑框里面输入公式:</div>
<div class="a" style="left:593px;top:597px;width:240px;height:22px;background:#fff;border:1px solid #d8d9db;box-sizing:border-box"></div>
<div class="a" style="left:834px;top:598px;width:43px;height:20px;background:#fff;border:1px solid #d8d9db;box-sizing:border-box;font-size:12.5px;line-height:19px;text-align:center">搜索</div>
<div class="a" style="left:1px;top:624px;width:876px;height:142px;background:#fff;overflow:hidden">
  <div class="a" style="left:0;top:48px;width:876px;height:16px;background:#ffffa6"></div>
  <div class="e" style="left:1px;top:-1px">'&lt;table&gt;&lt;tbody&gt;&lt;tr&gt;&lt;td&gt;&lt;p&gt;id&lt;/p&gt;&lt;/td&gt;&lt;td&gt;&lt;p&gt;<b>数量</b>&lt;/p&gt;&lt;/td&gt;&lt;td&gt;&lt;p&gt;<b>费用</b>&lt;/p&gt;&lt;/td&gt;&lt;td&gt;&lt;p&gt;<b>总价</b>&lt;/p&gt;&lt;/td&gt;&lt;td&gt;&lt;p&gt;<b>名次</b>&lt;/p&gt;&lt;/td&gt;&lt;/tr&gt;&lt;tr&gt;</div>
  <div class="e" style="left:1px;top:15px">&lt;td&gt;&lt;p&gt;123&lt;/p&gt;&lt;/td&gt;&lt;td rowspan="4"&gt;&lt;p&gt;88&lt;/p&gt;&lt;/td&gt;&lt;td&gt;&lt;p&gt;45&lt;/p&gt;&lt;/td&gt;&lt;td&gt;&lt;p&gt;500&lt;/p&gt;&lt;/td&gt;&lt;td&gt;&lt;p&gt;1&lt;/p&gt;&lt;/td&gt;&lt;/tr&gt;&lt;tr&gt;&lt;td&gt;&lt;p&gt;124&lt;/p</div>
  <div class="e" style="left:1px;top:31px">&gt;&lt;/td&gt;&lt;td&gt;&lt;p&gt;15&lt;/p&gt;&lt;/td&gt;&lt;td&gt;&lt;p&gt;254&lt;/p&gt;&lt;/td&gt;&lt;td&gt;&lt;p&gt;2&lt;/p&gt;&lt;/td&gt;&lt;/tr&gt;&lt;tr&gt;&lt;td&gt;&lt;p&gt;126&lt;/p&gt;&lt;/td&gt;&lt;td&gt;&lt;p&gt;872&lt;/p&gt;&lt;/td&gt;&lt;td&gt;&lt;p&gt;1856&lt;/p&gt;&lt;/t</div>
  <div class="e" style="left:1px;top:47px">d&gt;&lt;td&gt;&lt;p&gt;3&lt;/p&gt;&lt;/td&gt;&lt;/tr&gt;&lt;tr&gt;&lt;td&gt;&lt;p&gt;128&lt;/p&gt;&lt;/td&gt;&lt;td&gt;&lt;p&gt;61&lt;/p&gt;&lt;/td&gt;&lt;td&gt;&lt;p&gt;640&lt;/p&gt;&lt;/td&gt;&lt;td&gt;&lt;p&gt;4&lt;/p&gt;&lt;/td&gt;&lt;/tr&gt;&lt;/tbody&gt;&lt;/table&gt;'</div>
</div>
<svg class="a" style="left:10px;top:776px" width="92" height="14" viewBox="0 0 92 14">
  <rect x="0" y="0" width="13" height="13" fill="#3f97f7"/><path d="M3 6.5 L5.5 9.5 L10 3.5" fill="none" stroke="#fff" stroke-width="1.4"/>
  <rect x="78" y="0" width="13" height="13" fill="#3f97f7"/><path d="M81 6.5 L83.5 9.5 L88 3.5" fill="none" stroke="#fff" stroke-width="1.4"/>
</svg>
<div class="lbl" style="left:27px;top:773px;font-size:12px">输入提示</div>
<div class="lbl" style="left:105px;top:773px;font-size:12px">关闭前检查</div>
<div class="a" style="left:718px;top:771px;width:80px;height:20px;background:#fff;border:1px solid #d8d9db;box-sizing:border-box;font-size:12px;line-height:18px;text-align:center">检查合法性</div>
<div class="a" style="left:803px;top:771px;width:67px;height:20px;background:#fff;border:1px solid #d8d9db;box-sizing:border-box;font-size:12px;line-height:18px;text-align:center">模拟计算</div>
<div class="lbl" style="left:1px;top:801px;font-size:12px">函数类型:</div>
<div class="lbl" style="left:145px;top:801px;font-size:12px">函数名:</div>
<div class="lbl" style="left:289px;top:801px;font-size:12px">变量:</div>
<div class="lbl" style="left:452px;top:801px;font-size:12px">公式说明:</div>
<div class="a" style="left:1px;top:822px;width:140px;height:23px;background:#fff;border-top:1px solid #999;overflow:hidden">
  <div class="a" style="left:1px;top:1px;width:138px;height:17px;background:#4097f7;color:#fff;font-size:12px;line-height:17px;padding-left:2px;box-sizing:border-box">常用函数</div>
  <div class="a" style="left:3px;top:18px;font-size:12px;line-height:17px">新增函数</div>
</div>
<div class="a" style="left:145px;top:822px;width:140px;height:23px;background:#fff;border-top:1px solid #999;overflow:hidden">
  <div class="a" style="left:1px;top:1px;width:138px;height:17px;background:#4097f7;color:#fff;font:11px/17px 'Liberation Mono',monospace;padding-left:2px;box-sizing:border-box">SUM</div>
  <div class="a" style="left:3px;top:18px;font:11px/17px 'Liberation Mono',monospace">SUMIF</div>
</div>
<div class="a" style="left:289px;top:822px;width:162px;height:23px;background:#fff;border-top:1px solid #999;overflow:hidden">
  <svg class="a" style="left:8px;top:2px" width="30" height="21" viewBox="0 0 30 21"><path d="M0 8 H6 M0 8 V21" stroke="#ddd" fill="none"/><rect x="14" y="1" width="12" height="11" fill="#fff" stroke="#1a2fb0" stroke-width="1.5"/><path d="M16 4 H19 V7 H16Z M20.5 5 H24 M16 9 H24" stroke="#1a2fb0" fill="none"/><path d="M16 18 l3 -4 l3 4z" fill="#333"/></svg>
  <div class="a" style="left:41px;top:1px;font-size:12px;line-height:17px">数据项</div>
  <div class="a" style="left:41px;top:19px;font-size:12px;line-height:17px">变量</div>
  <div class="a" style="left:84px;top:19px;font:11px/17px 'Liberation Mono',monospace;color:#1a2fb0">[16]</div>
  <div class="a" style="left:153px;top:1px;width:8px;height:22px;background:#e3e4e6;border-radius:4px"></div>
</div>
<div class="a" style="left:453px;top:822px;width:424px;height:23px;background:#fff;border:1px solid #d8d9db;box-sizing:border-box;overflow:hidden">
  <div class="a m" style="left:4px;top:1px;font:11px/18px 'Liberation Mono','Noto Sans CJK SC',monospace;letter-spacing:-.45px;white-space:pre">SUM(number1,number2,…):<b style="font-size:12px">求一个指定单元格区域中所有数字之和。</b></div>
  <div class="a m" style="left:4px;top:19px;font:11px/18px 'Liberation Mono','Noto Sans CJK SC',monospace;letter-spacing:-.45px;white-space:pre">number1,number2,…:<b style="font-size:12px">1到30个参数或指定单元格区域中所有数字。</b></div>
</div>

<!-- red arrow -->
<svg class="a" style="left:460px;top:480px" width="32" height="135" viewBox="460 480 32 135">
  <path d="M473 485 L486 510 L478.5 508 L484.5 611 L483.5 611 L473.5 507 L466 510Z" fill="#f85a5a"/>
</svg>

</body>
</html>
